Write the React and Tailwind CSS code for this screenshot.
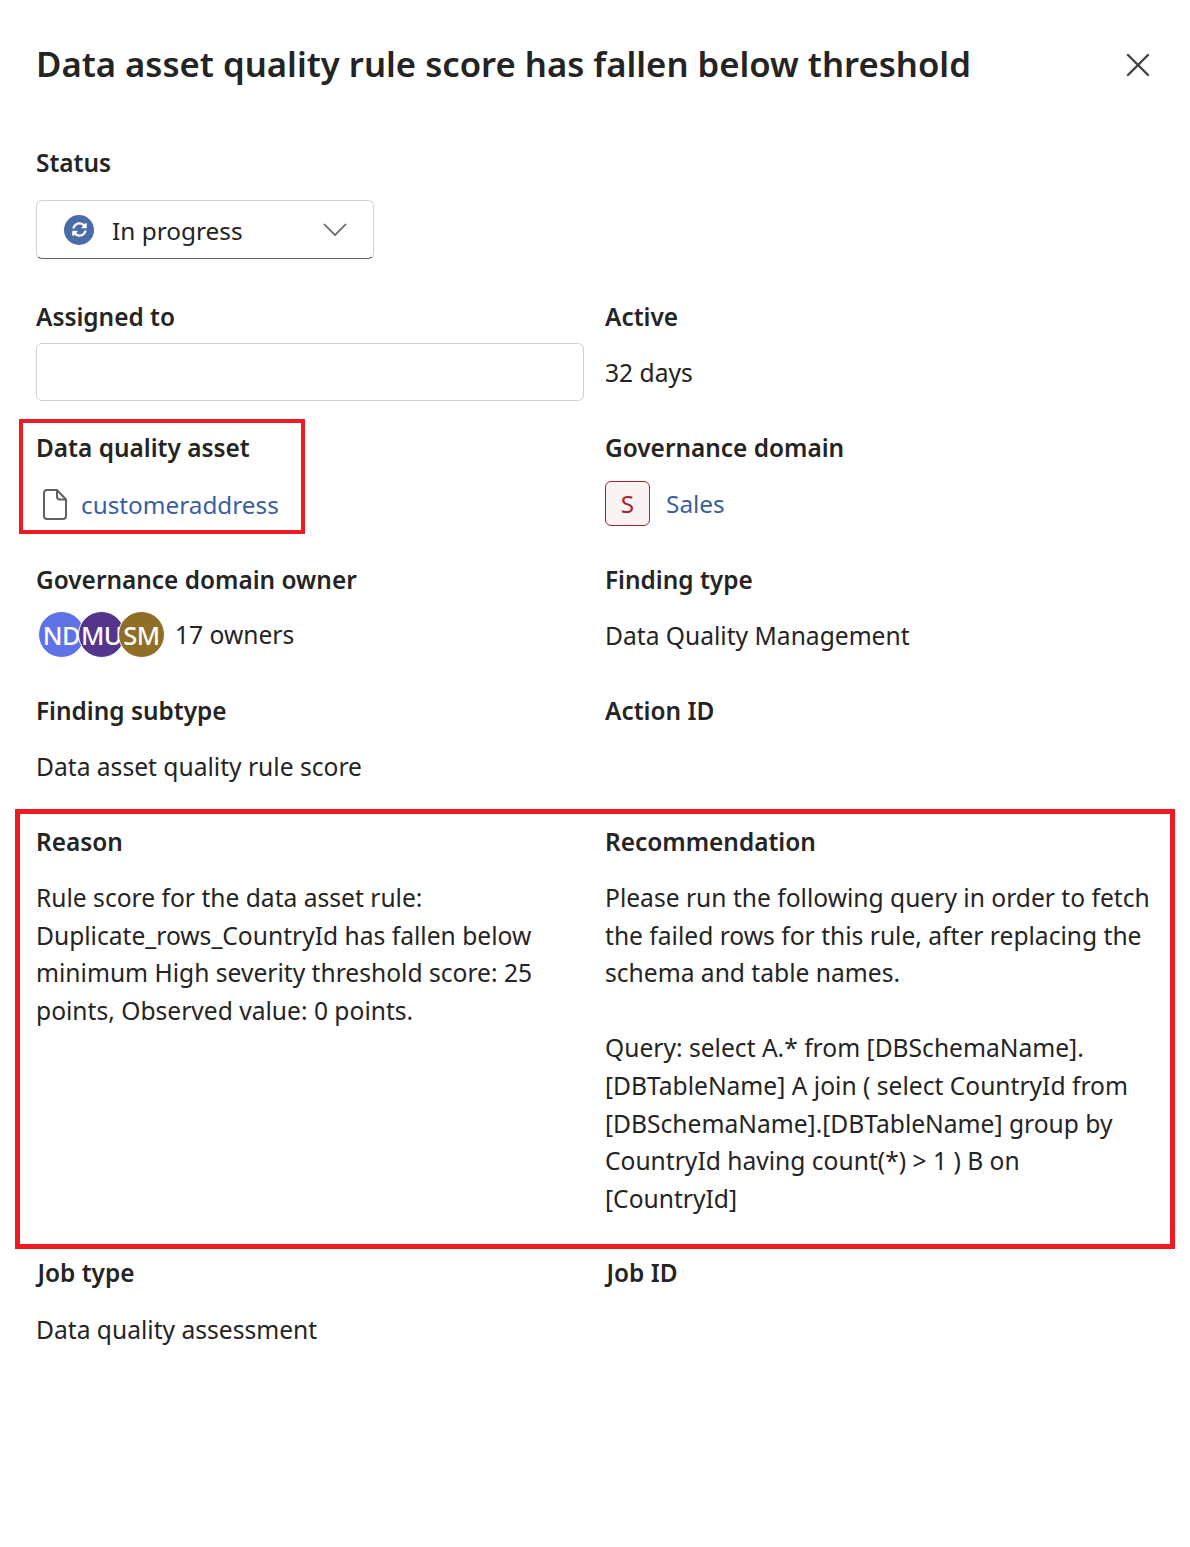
import { X } from 'lucide-react';
import { FaSyncAlt } from 'react-icons/fa';

const font = "font-['Noto_Sans','Open_Sans',sans-serif]";

function Label({ children }) {
  return <div className="h-[38px] text-[24.4px] leading-[40px] font-semibold text-[#242424]">{children}</div>;
}

function Field({ label, children }) {
  return (
    <div className="h-[131.3px]">
      <Label>{label}</Label>
      <div className="mt-[19px] text-[24.6px] leading-[38px] text-[#242424]">{children}</div>
    </div>
  );
}

function Avatar({ text, color, z }) {
  return (
    <div className={`w-[47px] h-[47px] -mr-[7px] rounded-full flex items-center justify-center text-white text-[25.500px] font-medium tracking-[-0.5px] border border-white ${color} ${z}`}>
      {text}
    </div>
  );
}

export default function App() {
  return (
    <div className={`w-[1190px] h-[1547px] bg-white pl-[36px] overflow-hidden text-[#242424] ${font}`}>
      {/* Header */}
      <div className="flex items-start justify-between pr-[32px] h-[130px]">
        <h1 className="mt-[36px] text-[34.700px] leading-[56px] font-semibold">Data asset quality rule score has fallen below threshold</h1>
        <button className="mt-[45px] text-[#424242]">
          <X size={40} strokeWidth={1.45} />
        </button>
      </div>

      <div className="h-[38px] mt-[13px]">
        <Label>Status</Label>
      </div>

      <div className="mt-[19px] w-[338px] h-[59px] rounded-md border border-[#d1d1d1] border-b-[#616161] flex items-center pl-[27px] pr-[26px]">
        <div className="w-[30px] h-[30px] rounded-full bg-[#4a6ca8] flex items-center justify-center">
          <FaSyncAlt size={15} className="text-white" />
        </div>
        <span className="ml-[18px] pt-[3px] text-[24.4px] flex-1">In progress</span>
        <svg width="24" height="14" viewBox="0 0 24 14" fill="none" stroke="#616161" strokeWidth="1.7">
          <path d="M1 1l11 11L23 1" />
        </svg>
      </div>

      <div className="mt-[38px] grid grid-cols-[569px_1fr]">
        <div className="h-[103px]">
          <Label>Assigned to</Label>
          <div className="mt-[8px] w-[548px] h-[58px] rounded-md border border-[#d1d1d1]"></div>
        </div>
        <div className="h-[103px]">
          <Label>Active</Label>
          <div className="mt-[19px] text-[24.6px] leading-[38px]">32 days</div>
        </div>
      </div>

      <div className="mt-[28px] grid grid-cols-[569px_1fr]">
        <div className="relative h-[132px]">
          <Label>Data quality asset</Label>
          <div className="mt-[19.500px] flex items-center text-[24.3px] leading-[38px] text-[#3a5f9e]">
            <svg width="24" height="31" viewBox="0 0 24 31" fill="none" stroke="#616161" strokeWidth="2" className="ml-[7px] mr-[14px]">
              <path d="M4 1h10l9 9.500V27a3 3 0 0 1-3 3H4a3 3 0 0 1-3-3V4a3 3 0 0 1 3-3Z" />
              <path d="M14 1v6.500a3 3 0 0 0 3 3h6" />
            </svg>
            customeraddress
          </div>
          <div className="absolute left-[-17px] top-[-9px] w-[286px] h-[115px] border-[4px] border-[#ed1c24]"></div>
        </div>
        <div className="h-[132px]">
          <Label>Governance domain</Label>
          <div className="mt-[15px] flex items-center text-[24.4px] leading-[38px]">
            <div className="w-[45px] h-[45px] rounded-md border border-[#a4262c] bg-[#f9f3f3] text-[#a4262c] flex items-center justify-center">S</div>
            <span className="ml-[16px] text-[#3a5f9e]">Sales</span>
          </div>
        </div>
      </div>

      <div className="grid grid-cols-[569px_1fr]">
        <Field label="Governance domain owner">
          <div className="flex items-center -mt-[6px]">
            <div className="flex ml-[2px]">
              <Avatar text="ND" color="bg-[#5f73e6]" z="z-0" />
              <Avatar text="MU" color="bg-[#54358c]" z="z-10" />
              <Avatar text="SM" color="bg-[#8f6f26]" z="z-20" />
            </div>
            <span className="ml-[17px] pt-[1px]">17 owners</span>
          </div>
        </Field>
        <Field label="Finding type">Data Quality Management</Field>
        <Field label="Finding subtype">Data asset quality rule score</Field>
        <Field label="Action ID"></Field>
      </div>

      <div className="relative -mt-[1px] grid grid-cols-[569px_1fr] h-[431px] pr-[36px]">
        <div>
          <Label>Reason</Label>
          <div className="mt-[19.400px] w-[520px] text-[24.6px] leading-[37.600px]">
            Rule score for the data asset rule: Duplicate_rows_CountryId has fallen below minimum High severity threshold score: 25 points, Observed value: 0 points.
          </div>
        </div>
        <div>
          <Label>Recommendation</Label>
          <div className="mt-[19.400px] text-[24.6px] leading-[37.600px]">
            <div>Please run the following query in order to fetch the failed rows for this rule, after replacing the schema and table names.</div>
            <div className="mt-[37.600px]">Query: select A.* from [DBSchemaName]. [DBTableName] A join ( select CountryId from [DBSchemaName].[DBTableName] group by CountryId having count(*) &gt; 1 ) B on [CountryId]</div>
          </div>
        </div>
        <div className="absolute left-[-21px] top-[-13px] w-[1160px] h-[440px] border-[5px] border-[#ed1c24]"></div>
      </div>

      <div className="grid grid-cols-[569px_1fr]">
        <Field label={<span className="ml-[1.500px]">Job type</span>}>
          <div className="pt-[1px]">Data quality assessment</div>
        </Field>
        <Field label={<span className="ml-[1.500px]">Job ID</span>}></Field>
      </div>
    </div>
  );
}
